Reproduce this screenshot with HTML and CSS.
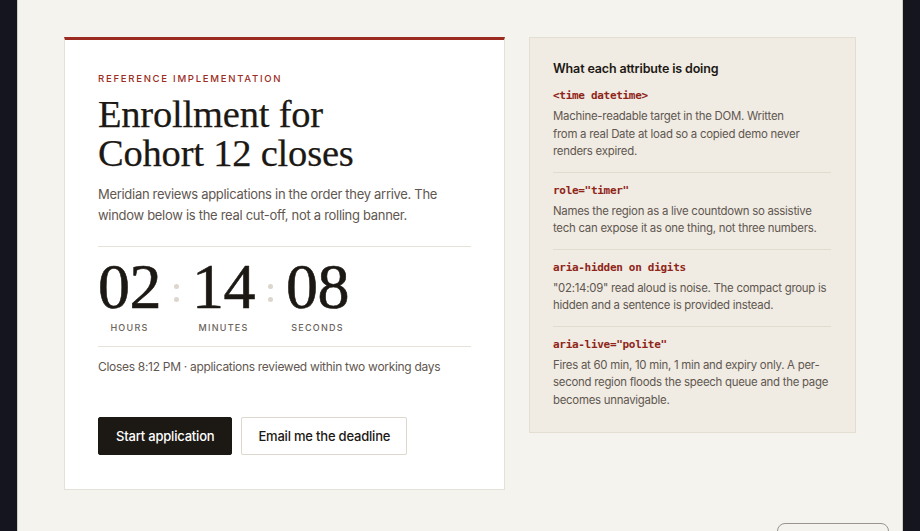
FILE: index.html
```html
<!DOCTYPE html>
<html lang="en">
<head>
<meta charset="utf-8">
<title>Enrollment countdown</title>
<link rel="stylesheet" href="styles.css">
</head>
<body>
<main class="page">
  <div class="layout">
    <section class="card">
      <p class="eyebrow">Reference implementation</p>
      <h1 class="title">Enrollment for<br>Cohort 12 closes</h1>
      <p class="lede">Meridian reviews applications in the order they arrive. The window below is the real cut-off, not a rolling banner.</p>
      <div class="timer" role="timer">
        <div class="unit"><span class="digits">02</span><span class="label">Hours</span></div>
        <div class="colon"><i></i><i></i></div>
        <div class="unit"><span class="digits">14</span><span class="label">Minutes</span></div>
        <div class="colon"><i></i><i></i></div>
        <div class="unit"><span class="digits">08</span><span class="label">Seconds</span></div>
      </div>
      <p class="closes">Closes 8:12 PM · applications reviewed within two working days</p>
      <div class="actions">
        <button class="btn btn-primary">Start application</button>
        <button class="btn btn-secondary">Email me the deadline</button>
      </div>
    </section>
    <aside class="notes">
      <h2 class="notes-title">What each attribute is doing</h2>
      <div class="note">
        <code>&lt;time datetime&gt;</code>
        <p>Machine-readable target in the DOM. Written<br>from a real Date at load so a copied demo never renders expired.</p>
      </div>
      <div class="note">
        <code>role="timer"</code>
        <p>Names the region as a live countdown so assistive tech can expose it as one thing, not three numbers.</p>
      </div>
      <div class="note">
        <code>aria-hidden on digits</code>
        <p>"02:14:09" read aloud is noise. The compact group is hidden and a sentence is provided instead.</p>
      </div>
      <div class="note">
        <code>aria-live="polite"</code>
        <p>Fires at 60 min, 10 min, 1 min and expiry only. A per-second region floods the speech queue and the page becomes unnavigable.</p>
      </div>
    </aside>
  </div>
  <div class="footer-row">
    <button class="ghost" aria-label="Reset demo"></button>
  </div>
</main>
</body>
</html>
```

FILE: styles.css
```css
* { box-sizing: border-box; }
html, body { margin: 0; padding: 0; }
body {
  background: #15151f;
  font-family: Inter, "Noto Sans", sans-serif;
  color: #1c1814;
}
.page {
  margin: 0 17px;
  min-height: 600px;
  background: #f5f3ee;
  border-left: 1px solid #cfccc6;
  border-right: 1px solid #cfccc6;
  padding: 37px 46px 0 46px;
}
.layout {
  display: grid;
  grid-template-columns: 441px 327px;
  gap: 24px;
  align-items: start;
}
.card {
  background: #ffffff;
  border: 1px solid #e6e1d8;
  border-top: 3px solid #9b2a20;
  padding: 32px 33px 34px 33px;
}
.eyebrow {
  margin: 0 0 9px;
  font-size: 9.6px;
  line-height: 14px;
  font-weight: 500;
  letter-spacing: 1.7px;
  text-transform: uppercase;
  color: #9b2c22;
}
.title {
  margin: 0;
  font-family: "Liberation Serif", "DejaVu Serif", serif;
  font-weight: 400;
  font-size: 38.5px;
  line-height: 39px;
  letter-spacing: -0.2px;
  color: #1c1814;
  -webkit-text-stroke: 0.25px #1c1814;
}
.lede {
  margin: 11px 0 20px;
  font-size: 13px;
  line-height: 21px;
  letter-spacing: -0.3px;
  color: #5f5750;
}
.timer {
  display: flex;
  align-items: flex-start;
  gap: 13px;
  border-top: 1px solid #e6e1d9;
  border-bottom: 1px solid #e6e1d9;
  padding: 8px 0 12px;
}
.unit {
  display: flex;
  flex-direction: column;
  align-items: center;
}
.digits {
  font-family: "Liberation Serif", "DejaVu Serif", serif;
  font-size: 64px;
  line-height: 64px;
  letter-spacing: -0.5px;
  color: #1c1814;
  -webkit-text-stroke: 0.6px #1c1814;
}
.label {
  margin-top: 3px;
  font-size: 9px;
  line-height: 12px;
  font-weight: 500;
  letter-spacing: 0.14em;
  text-transform: uppercase;
  color: #6b635c;
}
.colon {
  display: flex;
  flex-direction: column;
  gap: 8px;
  padding-top: 29px;
}
.colon i {
  display: block;
  width: 5px;
  height: 5px;
  border-radius: 50%;
  background: #dcd6cd;
}
.closes {
  margin: 11px 0 0;
  font-size: 12px;
  line-height: 18px;
  letter-spacing: -0.3px;
  color: #5f5750;
}
.actions {
  display: flex;
  gap: 9px;
  margin-top: 41px;
}
.btn {
  height: 38px;
  padding: 0 17px;
  font-family: Inter, "Noto Sans", sans-serif;
  font-size: 13px;
  letter-spacing: -0.2px;
  font-weight: 500;
  border-radius: 2px;
  cursor: pointer;
}
.btn-primary {
  background: #1c1814;
  color: #ffffff;
  border: 1px solid #1c1814;
}
.btn-secondary {
  background: #ffffff;
  color: #1c1814;
  border: 1px solid #ddd7ce;
  padding: 0 16px;
}
.notes {
  background: #f0ebe3;
  border: 1px solid #e4ddd2;
  padding: 22px 24px 23px 23px;
}
.notes-title {
  margin: 0 0 10px;
  font-size: 12.5px;
  line-height: 18px;
  letter-spacing: -0.15px;
  font-weight: 600;
  color: #1c1814;
}
.note {
  padding: 10px 0 11px;
  border-bottom: 1px solid #e2dbd0;
}
.note:first-of-type { padding-top: 0; }
.note:last-child { border-bottom: 0; padding-bottom: 0; }
.note code {
  display: block;
  font-family: "DejaVu Sans Mono", "Liberation Mono", monospace;
  font-weight: 700;
  font-size: 11px;
  letter-spacing: -0.3px;
  line-height: 16px;
  color: #8f2418;
}
.note p {
  margin: 4px 0 0;
  font-size: 11.4px;
  line-height: 17.5px;
  letter-spacing: -0.25px;
  color: #5f5750;
}
.footer-row {
  display: flex;
  justify-content: flex-end;
  margin-top: 33px;
  margin-right: -33px;
}
.ghost {
  width: 112px;
  height: 40px;
  background: #f5f3ee;
  border: 1.5px solid #99948e;
  border-radius: 8px;
}
```
